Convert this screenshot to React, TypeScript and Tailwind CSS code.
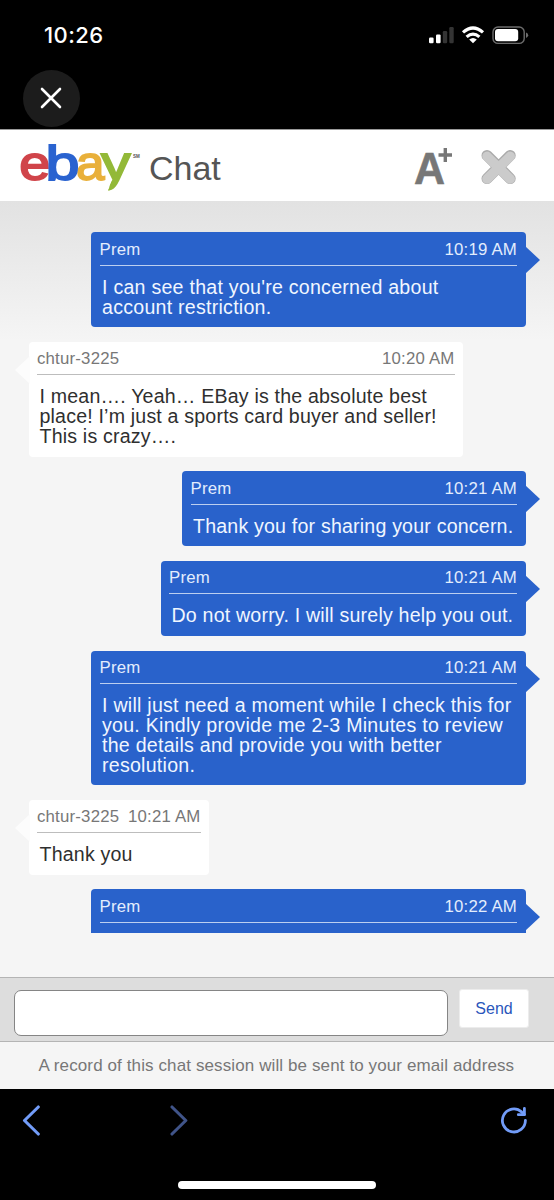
import React from "react";

type Message = {
  from: "agent" | "user";
  name: string;
  time: string;
  lines: string[];
  size: string;
};

const messages: Message[] = [
  {
    from: "agent",
    name: "Prem",
    time: "10:19 AM",
    lines: ["I can see that you're concerned about", "account restriction."],
    size: "w-[434.5px] h-[95px]",
  },
  {
    from: "user",
    name: "chtur-3225",
    time: "10:20 AM",
    lines: [
      "I mean…. Yeah… EBay is the absolute best",
      "place! I’m just a sports card buyer and seller!",
      "This is crazy….",
    ],
    size: "w-[434.5px] h-[114.8px]",
  },
  {
    from: "agent",
    name: "Prem",
    time: "10:21 AM",
    lines: ["Thank you for sharing your concern."],
    size: "w-[343.5px] h-[75px]",
  },
  {
    from: "agent",
    name: "Prem",
    time: "10:21 AM",
    lines: ["Do not worry. I will surely help you out."],
    size: "w-[365px] h-[75px]",
  },
  {
    from: "agent",
    name: "Prem",
    time: "10:21 AM",
    lines: [
      "I will just need a moment while I check this for",
      "you. Kindly provide me 2-3 Minutes to review",
      "the details and provide you with better",
      "resolution.",
    ],
    size: "w-[434.5px] h-[134.7px]",
  },
  {
    from: "user",
    name: "chtur-3225",
    time: "10:21 AM",
    lines: ["Thank you"],
    size: "w-[180.5px] h-[75px]",
  },
  {
    from: "agent",
    name: "Prem",
    time: "10:22 AM",
    lines: [],
    size: "w-[434.5px] h-[75px]",
  },
];

function Bubble({ message }: { message: Message }) {
  const agent = message.from === "agent";
  return (
    <div
      className={`relative shrink-0 rounded-[4px] px-[8.5px] ${message.size} ${
        agent ? "self-end bg-[#2962cb] text-[#f0f6ff]" : "self-start bg-white text-[#2f2f2f]"
      }`}
    >
      {agent ? (
        <svg className="absolute -right-[14.5px] top-[14px]" width="15" height="28" viewBox="0 0 15 28">
          <path d="M0 0L15 14L0 28Z" fill="#2962cb" />
        </svg>
      ) : (
        <svg className="absolute -left-[14px] top-[14px]" width="15" height="28" viewBox="0 0 15 28">
          <path d="M15 0L0 14L15 28Z" fill="#fcfcfc" />
        </svg>
      )}
      <div
        className={`flex h-[33.5px] items-center justify-between border-b-[1.4px] text-[16.8px] leading-[33px] tracking-[0.2px] ${
          agent ? "border-[#bccff0] text-[#e3edfd]" : "border-[#bdbdbd] text-[#777]"
        }`}
      >
        <span className="pt-[1.5px]">{message.name}</span>
        <span className="pt-[1.5px]">{message.time}</span>
      </div>
      <div
        className={`pl-[2.5px] pt-[11px] text-[19.6px] leading-[20px] ${
          message.lines.length === 1
            ? "tracking-[0.19px]"
            : agent
              ? "tracking-[0.25px]"
              : "tracking-[0.18px]"
        }`}
      >
        {message.lines.map((line) => (
          <div key={line} className="whitespace-nowrap">
            {line}
          </div>
        ))}
      </div>
    </div>
  );
}

function StatusBar() {
  return (
    <div className="flex h-[69.5px] items-center justify-between pl-[44px] pr-[25px]">
      <span className="pt-[1px] font-[Inter] text-[22px] font-medium leading-none tracking-[0.4px] text-white">10:26</span>
      <svg width="101" height="20" viewBox="428 25 101 20">
        <rect x="429" y="37.5" width="4.6" height="5.7" rx="1.2" fill="#fff" />
        <rect x="436" y="34.4" width="4.6" height="8.8" rx="1.2" fill="#fff" />
        <rect x="442.8" y="31" width="4.4" height="12.2" rx="1.2" fill="#343434" />
        <rect x="449.3" y="27" width="4.4" height="16.2" rx="1.2" fill="#343434" />
        <g fill="none" stroke="#fff" strokeWidth="3.2">
          <path d="M463 32.4Q473 23.6 483 32.4" />
          <path d="M466.6 36.9Q473 31.2 479.4 36.9" />
        </g>
        <path d="M469.2 39.6Q473 36.4 476.8 39.6L473 43.3Z" fill="#fff" />
        <rect x="493" y="27" width="31.2" height="16.4" rx="5" fill="none" stroke="#6c6c6c" strokeWidth="1.4" />
        <rect x="495" y="29" width="23.2" height="12.3" rx="3" fill="#fff" />
        <path d="M526 32.5Q528.2 33.3 528.2 35.2Q528.2 37.1 526 37.9Z" fill="#6c6c6c" />
      </svg>
    </div>
  );
}

function EbayLogo() {
  return (
    <svg width="124" height="70" viewBox="18 130 124 70" overflow="visible" fontFamily="Liberation Sans, Arial, sans-serif" fontSize="49" strokeWidth="1.8">
      <clipPath id="tail">
        <path d="M98 150H140V194H107L111 182L98 160Z" />
      </clipPath>
      <text x="19.3" y="180.3" fill="#d0444a" stroke="#d0444a" textLength="31" lengthAdjust="spacingAndGlyphs">e</text>
      <text x="76" y="180.3" fill="#e9b03a" stroke="#e9b03a" textLength="28.5" lengthAdjust="spacingAndGlyphs">a</text>
      <text x="45.5" y="180.3" fill="#2a63d0" stroke="#2a63d0" textLength="34" lengthAdjust="spacingAndGlyphs">b</text>
      <g clipPath="url(#tail)">
        <text x="101" y="179.5" fill="#93b938" stroke="#93b938" textLength="29.5" lengthAdjust="spacingAndGlyphs">y</text>
      </g>
      <text x="133" y="158" fill="#555" fontSize="4.5" fontWeight="700" strokeWidth="0">SM</text>
    </svg>
  );
}

function ChatHeader() {
  return (
    <header className="flex h-[71.5px] items-start border-t border-[#9a9a9a] bg-white pl-[18px]">
      <EbayLogo />
      <span className="ml-[7px] pt-[19px] text-[34px] leading-[39px] text-[#555]">Chat</span>
      <div className="ml-auto flex pr-[36px]">
        <svg width="42" height="70" viewBox="413 130 42 70" overflow="visible">
          <text x="414" y="183.7" fontFamily="Liberation Sans, Arial, sans-serif" fontWeight="700" fontSize="45" fill="#777" stroke="#777" strokeWidth="0.6" textLength="31" lengthAdjust="spacingAndGlyphs">A</text>
          <path d="M445.3 148V162M438.5 155H452" stroke="#777" strokeWidth="3.4" />
        </svg>
        <svg className="ml-[24px]" width="39" height="70" viewBox="479 130 39 70">
          <path d="M487 155.4L510.2 178.6M510.2 155.4L487 178.6" stroke="#aaa" strokeWidth="11" strokeLinecap="round" />
          <path d="M487 156.4L510.2 179M510.2 156.4L487 179" stroke="#cbcbcb" strokeWidth="9.6" strokeLinecap="round" />
        </svg>
      </div>
    </header>
  );
}

export default function App() {
  return (
    <div className="flex h-[1200px] w-[554px] flex-col overflow-hidden bg-black font-['Liberation_Sans',Arial,sans-serif]">
      <StatusBar />
      <div className="h-[59.5px] pl-[22.5px]">
        <button className="flex size-[57px] items-center justify-center rounded-full bg-[#1c1c1c]">
          <svg width="22" height="22" viewBox="0 0 22 22" fill="none" stroke="#fff" strokeWidth="2.6" strokeLinecap="round">
            <path d="M2 2L20 20M20 2L2 20" />
          </svg>
        </button>
      </div>
      <ChatHeader />
      <main className="h-[776.5px] bg-[#f5f5f5] bg-[linear-gradient(#e2e2e2_0px,#f5f5f5_140px)]">
        <div className="flex h-[732px] flex-col gap-[14.6px] overflow-hidden pl-[28.5px] pr-[28.5px] pt-[31.9px]">
          {messages.map((message, index) => (
            <Bubble key={index} message={message} />
          ))}
        </div>
      </main>
      <div className="flex h-[65px] items-start border-y border-[#b4b4b4] bg-[#ddd] pl-[14px] pt-[11px]">
        <input className="mt-px h-[46px] w-[433.5px] rounded-[7px] border border-[#858585] bg-white" />
        <button className="ml-[11.5px] h-[39px] w-[70px] rounded-[3px] border border-[#ececec] bg-white text-[16px] leading-[36px] text-[#2a56bb]">
          Send
        </button>
      </div>
      <p className="h-[47px] bg-[#f5f5f5] pl-[38.5px] text-[17px] leading-[47px] tracking-[0.11px] whitespace-nowrap text-[#777]">
        A record of this chat session will be sent to your email address
      </p>
      <nav className="flex h-[92px] items-start pl-[21px] pr-[25px] pt-[15px]">
        <svg width="20" height="32" viewBox="0 0 20 32" fill="none" stroke="#729cf8" strokeWidth="3.1" strokeLinecap="round" strokeLinejoin="round">
          <path d="M17.3 3L3.5 16.5L17.3 30" />
        </svg>
        <svg className="ml-[128px]" width="20" height="32" viewBox="0 0 20 32" fill="none" stroke="#405489" strokeWidth="3.1" strokeLinecap="round" strokeLinejoin="round">
          <path d="M3 3L16.8 16.5L3 30" />
        </svg>
        <svg className="ml-auto" width="30" height="32" viewBox="499 1104 30 32" fill="none" stroke="#729cf8" strokeWidth="2.8" strokeLinecap="round" strokeLinejoin="round">
          <path d="M525.4 1120.3A11.5 11.5 0 1 1 521.6 1111.9L524.3 1114.5" />
          <path d="M524.4 1108.5V1114.7H518.3" />
        </svg>
      </nav>
      <div className="h-[7.5px] w-[198px] self-center rounded-full bg-white" />
    </div>
  );
}
